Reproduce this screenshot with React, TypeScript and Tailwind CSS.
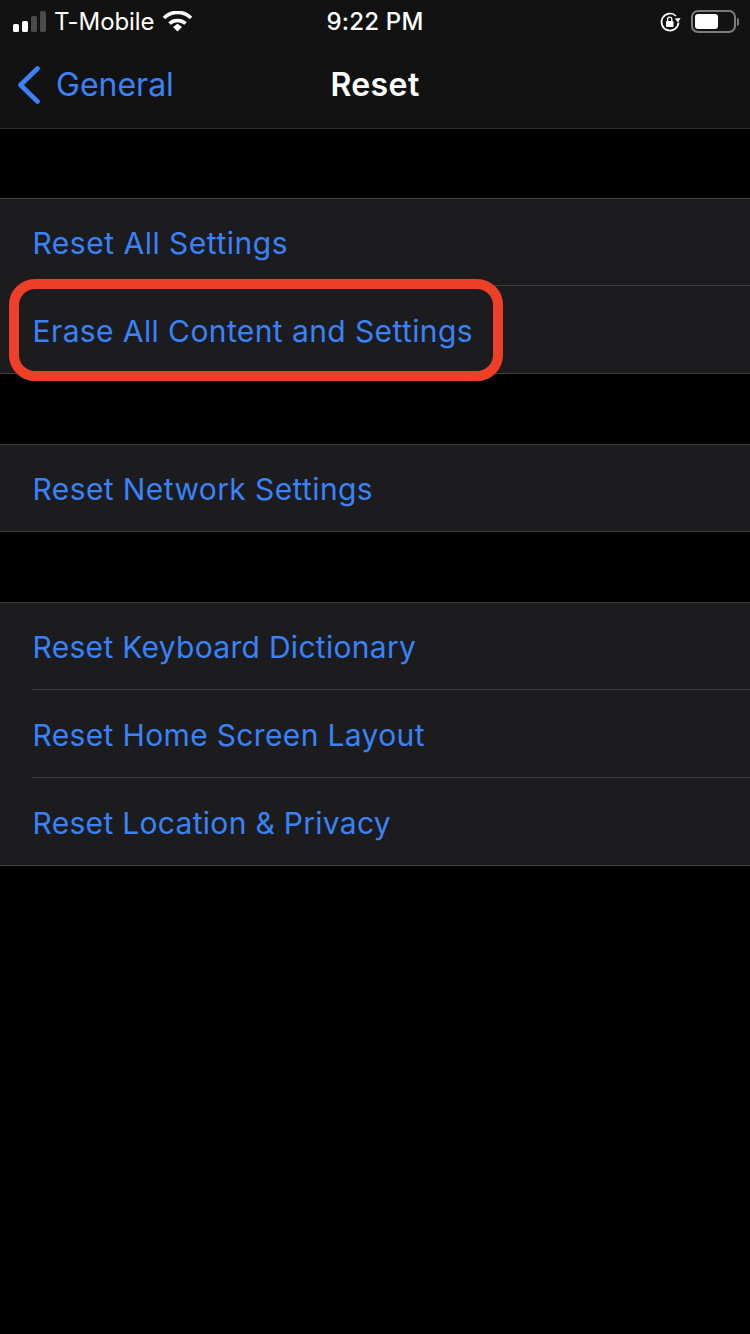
const font = "font-['Inter','Liberation_Sans',sans-serif]";

function Row({ label, h, track, pad, line }: { label: string; h: string; track: string; pad: string; line?: boolean }) {
  return (
    <div className="pl-[32px] bg-[#1c1c1e]">
      <div className={`${h} ${track} ${pad} ${line ? "border-b border-[#3d3d40]" : ""} flex items-center text-[30px] text-[#3a82f7]`}>
        <span className="ml-[0.5px]">{label}</span>
      </div>
    </div>
  );
}

function Group({ children }: { children: React.ReactNode }) {
  return <div className="border-y border-[#3d3d40] bg-[#1c1c1e]">{children}</div>;
}

export default function App() {
  return (
    <div className={`relative w-[750px] h-[1334px] bg-black overflow-hidden ${font}`}>
      <div className="bg-[#121212] border-b border-[#2c2c2e] h-[129px]">
        <div className="relative h-[43px] flex items-center text-white">
          <div className="flex items-center pl-[13px]">
            <svg width="34" height="22" viewBox="0 0 34 22">
              <rect x="0" y="13" width="6" height="8" rx="1.5" fill="#fff" />
              <rect x="9" y="10" width="6" height="11" rx="1.5" fill="#fff" />
              <rect x="18" y="5" width="6" height="16" rx="1.5" fill="#4a4a4a" />
              <rect x="27" y="0" width="6" height="21" rx="1.5" fill="#4a4a4a" />
            </svg>
            <span className="ml-[7px] text-[24px] tracking-[-0.1px] leading-none">T-Mobile</span>
            <svg className="ml-[8px]" width="31" height="22" viewBox="0 1 31 22">
              <path d="M2 8C9.5 0.5 21.5 0.5 29 8" fill="none" stroke="#fff" strokeWidth="3.6" />
              <path d="M7.5 13.5C12 9.5 19 9.5 23.5 13.5" fill="none" stroke="#fff" strokeWidth="3.6" />
              <path d="M11 17L15.5 13.8L20 17L15.5 21.5Z" fill="#fff" />
            </svg>
          </div>
          <span className="absolute left-0 right-0 text-center text-[24px] font-medium tracking-[0.2px] leading-none">9:22 PM</span>
          <div className="ml-auto flex items-center pr-[11px]">
            <svg width="22" height="22" viewBox="0 0 22 22">
              <path d="M19.5 11.5A8.5 8.5 0 1 1 17 5" fill="none" stroke="#fff" strokeWidth="1.7" />
              <path d="M15.8 7.6L21.6 7L19 11.6Z" fill="#fff" />
              <rect x="7" y="10" width="7.5" height="6" rx="1" fill="#fff" />
              <path d="M8.6 10V8.2a2.1 2.1 0 0 1 4.2 0V10" fill="none" stroke="#fff" strokeWidth="1.3" />
            </svg>
            <div className="ml-[10px] flex items-center">
              <div className="w-[45px] h-[23px] rounded-[7px] border-2 border-[#7c7c7c] p-[2px] flex">
                <div className="w-[23px] h-full rounded-[3px] bg-white" />
              </div>
              <div className="ml-[1px] w-[2px] h-[8px] rounded-r-sm bg-[#7c7c7c]" />
            </div>
          </div>
        </div>
        <div className="relative h-[83px] flex items-center">
          <svg className="ml-[16px]" width="24" height="38" viewBox="0 0 24 38">
            <path d="M21.5 2.5L4.5 19L21.5 35.5" fill="none" stroke="#3a82f7" strokeWidth="4.6" strokeLinecap="round" strokeLinejoin="round" />
          </svg>
          <span className="ml-[16px] text-[32px] text-[#3a82f7] leading-none">General</span>
          <span className="absolute left-0 right-0 text-center text-[32px] font-semibold tracking-[0.4px] text-white leading-none">Reset</span>
        </div>
      </div>

      <div className="mt-[69px]">
        <Group>
          <Row label="Reset All Settings" h="h-[87px]" pad="pt-[2px]" track="tracking-[0.5px]" line />
          <Row label="Erase All Content and Settings" h="h-[87px]" pad="pt-[4px]" track="tracking-[0.4px]" />
        </Group>
      </div>
      <div className="mt-[70px]">
        <Group>
          <Row label="Reset Network Settings" h="h-[86px]" pad="pt-[2px]" track="tracking-[0.4px]" />
        </Group>
      </div>
      <div className="mt-[70px]">
        <Group>
          <Row label="Reset Keyboard Dictionary" h="h-[87px]" pad="pt-[2px]" track="tracking-[0.3px]" line />
          <Row label="Reset Home Screen Layout" h="h-[88px]" pad="pt-[4px]" track="tracking-[0.35px]" line />
          <Row label="Reset Location & Privacy" h="h-[87px]" pad="pt-[4px]" track="tracking-[0.3px]" />
        </Group>
      </div>

      <div className="absolute left-[9px] top-[279px] w-[494px] h-[102px] rounded-[26px] border-[10px] border-[#ee4028]" />
    </div>
  );
}
